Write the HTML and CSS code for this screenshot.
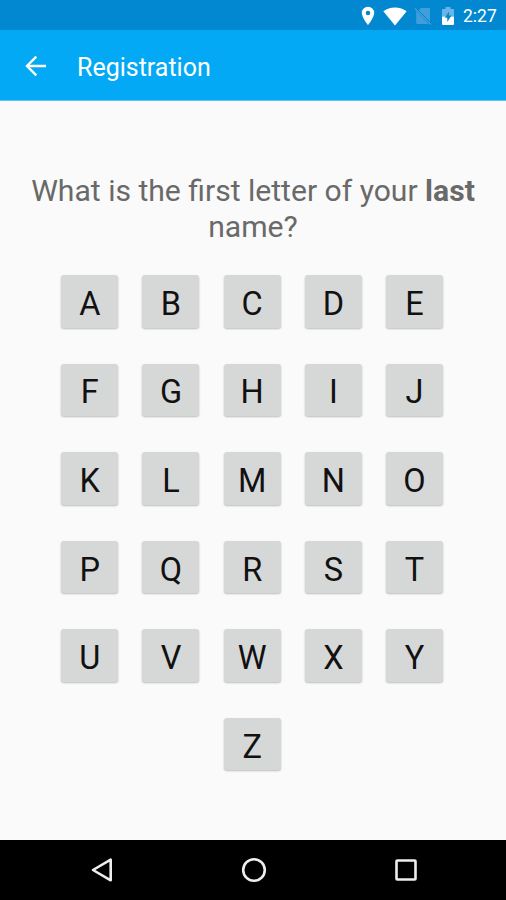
FILE: index.html
```html
<!DOCTYPE html>
<html lang="en">
<head>
  <meta charset="UTF-8" />
  <title>Registration</title>
  <link rel="stylesheet" href="styles.css">
</head>
<body>
  <div class="status-bar">
    <svg class="icon-location" width="14" height="20" viewBox="0 0 14 20">
      <path fill="#fff" fill-rule="evenodd" d="M7 .8A6.2 6.2 0 0 0 .8 7C.8 11.6 7 19 7 19s6.200-7.400 6.200-12A6.200 6.200 0 0 0 7 .8zM7 4.700a2.300 2.300 0 1 1 0 4.600 2.300 2.300 0 0 1 0-4.600z"/>
    </svg>
    <svg class="icon-wifi" width="24" height="19" viewBox="0 0 24 19">
      <path fill="#fff" d="M12 18.500L.3 4.200C3.500 1.700 7.500.4 12 .4s8.500 1.300 11.700 3.800z"/>
    </svg>
    <svg class="icon-sim" width="18" height="20" viewBox="0 0 18 20">
      <path fill="#409fdb" d="M7 2H15q1 0 1 1v13L4.600 4.400zM2.200 5L14.800 18H3.200q-1 0-1-1z"/>
      <path stroke="#409fdb" stroke-width="1.500" d="M1 2.500L17 18.500"/>
      <path stroke="#0288d1" stroke-width="1" d="M3 3L17 17"/>
    </svg>
    <svg class="icon-battery" width="14" height="20" viewBox="0 0 14 20">
      <path fill="#69b5e5" d="M4.500 1h5v2H12q1 0 1 1v6.500H1V4q0-1 1-1h2.500z"/>
      <path fill="#fff" d="M1 10.500h12V18q0 1-1 1H2q-1 0-1-1z"/>
      <path fill="#0288d1" d="M8 5.500L3.800 11.700H6.300V16L10.500 9.500H8z"/>
    </svg>
    <span class="clock">2:27</span>
  </div>

  <header class="app-bar">
    <svg class="icon-back" width="22" height="22" viewBox="0 0 22 22">
      <path fill="none" stroke="#fff" stroke-width="2.400" d="M21 11H2.500M11.300 1.700L2 11l9.300 9.300"/>
    </svg>
    <h1>Registration</h1>
  </header>

  <main>
    <p class="question">What is the first letter of your <b>last</b> name?</p>
    <div class="letters">
      <button>A</button>
      <button>B</button>
      <button>C</button>
      <button>D</button>
      <button>E</button>
      <button>F</button>
      <button>G</button>
      <button>H</button>
      <button>I</button>
      <button>J</button>
      <button>K</button>
      <button>L</button>
      <button>M</button>
      <button>N</button>
      <button>O</button>
      <button>P</button>
      <button>Q</button>
      <button>R</button>
      <button>S</button>
      <button>T</button>
      <button>U</button>
      <button>V</button>
      <button>W</button>
      <button>X</button>
      <button>Y</button>
      <button class="last-letter">Z</button>
    </div>
  </main>

  <nav class="nav-bar">
    <svg width="26" height="26" viewBox="0 0 26 26">
      <path fill="none" stroke="#eee" stroke-width="2.600" stroke-linejoin="round" d="M21.700 2.700v20.600L4 13z"/>
    </svg>
    <svg width="26" height="26" viewBox="0 0 26 26">
      <circle cx="13" cy="13" r="10.800" fill="none" stroke="#eee" stroke-width="2.600"/>
    </svg>
    <svg width="26" height="26" viewBox="0 0 26 26">
      <rect x="3.500" y="3.500" width="19" height="19" rx=".8" fill="none" stroke="#eee" stroke-width="2.600"/>
    </svg>
  </nav>
</body>
</html>
```

FILE: styles.css
```css
* {
  box-sizing: border-box;
}
body {
  margin: 0;
  height: 900px;
  display: flex;
  flex-direction: column;
  background: #fafafa;
  font-family: Roboto, sans-serif;
  overflow: hidden;
}
.status-bar {
  height: 30px;
  flex: none;
  display: flex;
  align-items: center;
  justify-content: flex-end;
  padding: 2px 9px 0 0;
  background: #0288d1;
}
.icon-wifi {
  margin-left: 8px;
}
.icon-sim {
  margin-left: 7px;
}
.icon-battery {
  margin-left: 9px;
}
.clock {
  margin-left: 8px;
  width: 34px;
  font-size: 17.500px;
  line-height: 20px;
  color: #fff;
}
.app-bar {
  height: 71px;
  flex: none;
  display: flex;
  align-items: center;
  padding: 2px 0 0 25px;
  background: #03a9f4;
  border-bottom: 1px solid #5fc5f5;
}
.app-bar h1 {
  margin: 2px 0 0 30px;
  font-size: 25px;
  font-weight: 400;
  color: #fff;
}
main {
  flex: 1;
  padding-top: 72px;
}
.question {
  margin: 0 auto;
  width: 460px;
  font-size: 30.100px;
  line-height: 35.500px;
  text-align: center;
  color: #696969;
}
.letters {
  display: grid;
  grid-template-columns: repeat(5, 57px);
  grid-auto-rows: 52.500px;
  gap: 36.100px 24.200px;
  margin: 31px 0 0 61.300px;
}
.letters button {
  padding: 5px 0 0;
  border: none;
  border-radius: 3px;
  background: #d6d7d7;
  box-shadow: 0 1px 2px rgba(0, 0, 0, 0.25);
  font-family: inherit;
  font-size: 32.500px;
  line-height: 38px;
  color: #111;
}
.letters .last-letter {
  grid-column: 3;
}
.nav-bar {
  height: 60px;
  flex: none;
  display: flex;
  align-items: center;
  justify-content: center;
  gap: 126px;
  padding-left: 2px;
  background: #000;
}
```
